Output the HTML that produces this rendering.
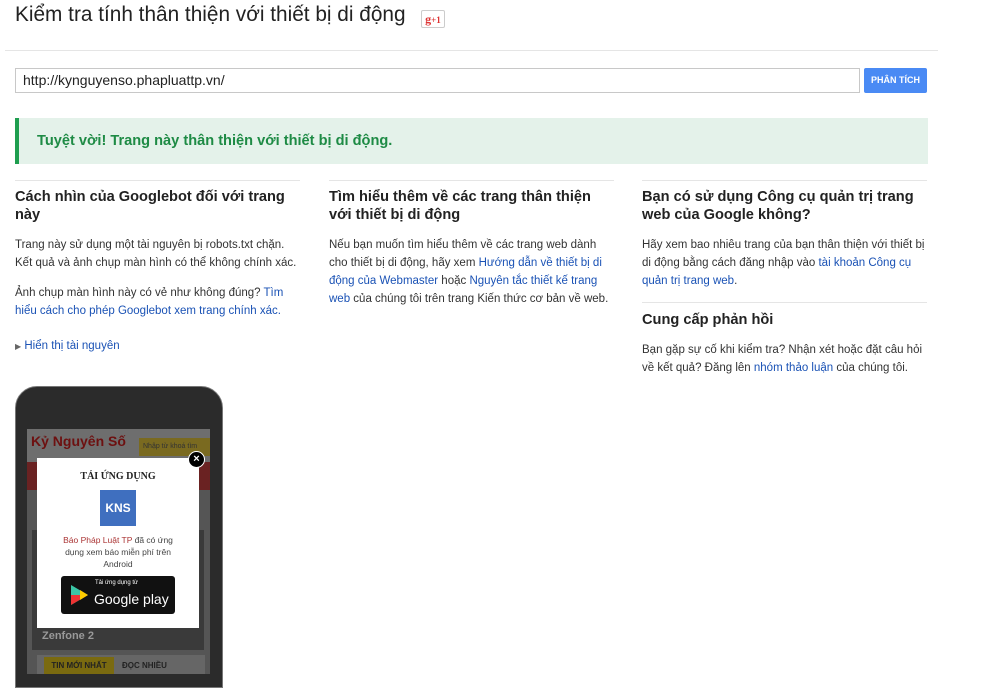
<html><head><style>
body{margin:0;width:1000px;height:674px;overflow:hidden;background:#fff;font-family:"Liberation Sans",Arial,sans-serif;color:#222;position:relative}
.a{position:absolute}
h1{position:absolute;left:15px;top:3px;margin:0;font-weight:normal;font-size:20.8px;color:#222}
.col{position:absolute;top:180px;width:285px;border-top:1px solid #e5e5e5;font-size:11.5px;line-height:18px;color:#333}
.col h2{font-size:14.6px;line-height:18px;margin:7px 0 12px;color:#222}
.col p{margin:0 0 12px}
a{color:#1a52b5;text-decoration:none}
</style></head><body>
<h1>Kiểm tra tính thân thiện với thiết bị di động</h1>
<div class="a" style="left:421px;top:10px;width:22px;height:16px;border:1px solid #ccc;border-radius:2px;color:#d33;font:bold 12px 'Liberation Serif',serif;text-align:center;line-height:16px">g<span style="font-size:9px">+1</span></div>
<div class="a" style="left:5px;top:50px;width:933px;border-top:1px solid #e5e5e5"></div>
<div class="a" style="left:15px;top:68px;width:836px;height:23px;border:1px solid #c8c8c8;font-size:14px;line-height:23px;padding-left:7px">http://kynguyenso.phapluattp.vn/</div>
<div class="a" style="left:864px;top:68px;width:63px;height:25px;background:#4a8af4;border-radius:2px;color:#fff;font-size:9px;font-weight:bold;text-align:center;line-height:25px">PHÂN TÍCH</div>
<div class="a" style="left:15px;top:118px;width:909px;height:46px;background:#e4f2ea;border-left:4px solid #1e9e4f"></div>
<div class="a" style="left:37px;top:133px;font-size:14.6px;font-weight:bold;color:#1e8b45">Tuyệt vời! Trang này thân thiện với thiết bị di động.</div>
<div class="col" style="left:15px"><h2>Cách nhìn của Googlebot đối với trang này</h2>
<p>Trang này sử dụng một tài nguyên bị robots.txt chặn. Kết quả và ảnh chụp màn hình có thể không chính xác.</p>
<p>Ảnh chụp màn hình này có vẻ như không đúng? <a>Tìm hiểu cách cho phép Googlebot xem trang chính xác.</a></p>
<p style="margin-top:17px"><span style="font-size:8px;color:#666">▶</span> <a>Hiển thị tài nguyên</a></p></div>
<div class="col" style="left:329px"><h2>Tìm hiểu thêm về các trang thân thiện với thiết bị di động</h2>
<p>Nếu bạn muốn tìm hiểu thêm về các trang web dành cho thiết bị di động, hãy xem <a>Hướng dẫn về thiết bị di động của Webmaster</a> hoặc <a>Nguyên tắc thiết kế trang web</a> của chúng tôi trên trang Kiến thức cơ bản về web.</p></div>
<div class="col" style="left:642px"><h2>Bạn có sử dụng Công cụ quản trị trang web của Google không?</h2>
<p>Hãy xem bao nhiêu trang của bạn thân thiện với thiết bị di động bằng cách đăng nhập vào <a>tài khoản Công cụ quản trị trang web</a>.</p>
<div style="border-top:1px solid #e5e5e5;margin-top:0"></div>
<h2 style="margin-top:8px">Cung cấp phản hồi</h2>
<p>Bạn gặp sự cố khi kiểm tra? Nhận xét hoặc đặt câu hỏi về kết quả? Đăng lên <a>nhóm thảo luận</a> của chúng tôi.</p></div>
<!-- phone -->
<div class="a" style="left:15px;top:386px;width:206px;height:300px;background:#2b2b2b;border-radius:22px 22px 0 0;border:1px solid #777"></div>
<div class="a" style="left:27px;top:429px;width:183px;height:245px;background:#555"></div>
<div class="a" style="left:27px;top:429px;width:183px;height:33px;background:#6e6e6e"></div>
<div class="a" style="left:31px;top:433px;font-size:14px;font-weight:bold;color:#6d1010">Kỷ Nguyên Số</div>
<div class="a" style="left:139px;top:438px;width:67px;height:18px;background:#7a6a20;color:#333;font-size:7px;line-height:18px;padding-left:4px;overflow:hidden;white-space:nowrap">Nhập từ khoá tìm</div>
<div class="a" style="left:27px;top:462px;width:183px;height:28px;background:#6a2222"></div>
<div class="a" style="left:32px;top:530px;width:172px;height:120px;background:#3a3a3a"></div>
<div class="a" style="left:42px;top:630px;font-size:11px;font-weight:bold;color:#999">Zenfone 2</div>
<div class="a" style="left:37px;top:655px;width:168px;height:19px;background:#666"></div>
<div class="a" style="left:44px;top:657px;width:70px;height:17px;background:#7a6a10;font-size:8px;font-weight:bold;line-height:17px;text-align:center;color:#222">TIN MỚI NHẤT</div>
<div class="a" style="left:122px;top:657px;font-size:8px;font-weight:bold;line-height:17px;color:#222">ĐỌC NHIỀU</div>
<div class="a" style="left:37px;top:458px;width:162px;height:170px;background:#fff;text-align:center">
<div style="font:bold 10px 'Liberation Serif',serif;margin-top:13px">TẢI ỨNG DỤNG</div>
<div style="width:36px;height:36px;margin:8px auto 0;background:#3f6fbf;color:#fff;font-weight:bold;font-size:12px;line-height:36px">KNS</div>
<div style="font-size:8.5px;line-height:12px;color:#444;margin:8px 16px 0"><span style="color:#a33">Báo Pháp Luật TP</span> đã có ứng dụng xem báo miễn phí trên Android</div>
<div style="width:114px;height:38px;margin:6px auto 0;background:#111;border-radius:3px;position:relative;color:#fff">
<svg style="position:absolute;left:8px;top:8px" width="20" height="22"><polygon points="2,1 19,11 2,21" fill="#3bc6a6"/><polygon points="2,11 19,11 2,21" fill="#e33"/><polygon points="11,6 19,11 11,16" fill="#fc0"/></svg>
<div style="position:absolute;left:34px;top:4px;font-size:6px">Tải ứng dụng từ</div>
<div style="position:absolute;left:33px;top:15px;font-size:14px">Google play</div></div>
</div>
<div class="a" style="left:188px;top:451px;width:15px;height:15px;border-radius:50%;background:#000;border:1px solid #fff;color:#fff;font-size:11px;font-weight:bold;text-align:center;line-height:15px">×</div>
</body></html>
